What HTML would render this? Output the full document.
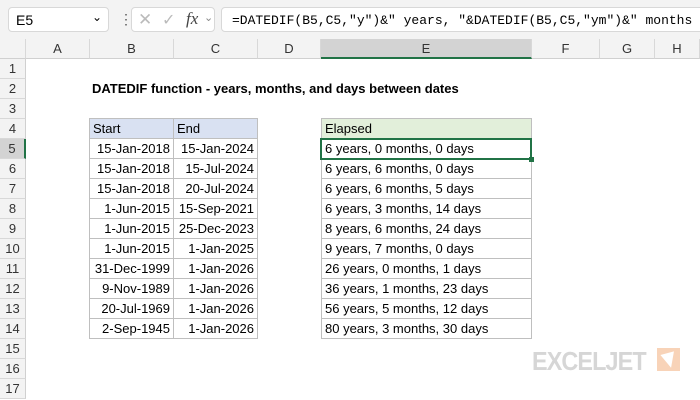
<!DOCTYPE html>
<html><head><style>
*{margin:0;padding:0;box-sizing:border-box}
body{width:700px;height:400px;overflow:hidden;background:#fff;font-family:"Liberation Sans",sans-serif;position:relative}
.top{position:absolute;left:0;top:0;width:700px;height:39px;background:#f3f3f3}
.nb{position:absolute;left:8px;top:7px;width:101px;height:25px;background:#fff;border:1px solid #d8d8d8;border-radius:4px;font-size:14px;padding:4px 7px}
.fb{position:absolute;left:131px;top:7px;width:84px;height:25px;background:#fff;border:1px solid #d8d8d8;border-radius:4px}
.fx{position:absolute;left:221px;top:7px;width:490px;height:25px;background:#fff;border:1px solid #d8d8d8;border-radius:4px;font-family:"Liberation Mono",monospace;font-size:13px;padding:5px 10px;white-space:nowrap}
.ch{position:absolute;top:39px;height:20px;background:#f3f3f3;border-right:1px solid #d8d8d8;border-bottom:1px solid #d0d0d0;font-size:13px;color:#333;text-align:center;line-height:20px}
.rh{position:absolute;left:0;width:26px;height:20px;background:#f3f3f3;border-bottom:1px solid #d8d8d8;border-right:1px solid #d0d0d0;font-size:13px;color:#333;text-align:center;line-height:20px}
.c{position:absolute;height:20px;font-size:13px;line-height:20px;padding:0 3px;white-space:nowrap;color:#000}
.r{text-align:right}
.bd{border-right:1px solid #bfbfbf;border-bottom:1px solid #bfbfbf}
</style></head><body>
<div class="top"></div>
<div class="nb">E5<span style="position:absolute;right:6px;top:2px;font-size:12px">&#8964;</span></div>
<div style="position:absolute;left:119px;top:11px;font-size:14px;color:#555">&#8942;</div>
<div class="fb"><span style="position:absolute;left:6px;top:2px;color:#bbb;font-size:17px">&#10005;</span><span style="position:absolute;left:30px;top:2px;color:#bbb;font-size:16px">&#10003;</span><span style="position:absolute;left:54px;top:1px;font-family:'Liberation Serif',serif;font-style:italic;font-size:17px;color:#444">fx</span><span style="position:absolute;left:72px;top:3px;font-size:11px;color:#888">&#8964;</span></div>
<div class="fx">=DATEDIF(B5,C5,"y")&amp;" years, "&amp;DATEDIF(B5,C5,"ym")&amp;" months</div>
<div class="ch" style="left:0;width:26px"></div>
<div class="ch" style="left:26px;width:64px">A</div>
<div class="ch" style="left:90px;width:84px">B</div>
<div class="ch" style="left:174px;width:84px">C</div>
<div class="ch" style="left:258px;width:63px">D</div>
<div class="ch" style="left:321px;width:211px;background:#d3d3d3;border-bottom:2px solid #217346">E</div>
<div class="ch" style="left:532px;width:68px">F</div>
<div class="ch" style="left:600px;width:55px">G</div>
<div class="ch" style="left:655px;width:45px">H</div>
<div class="rh" style="top:59px">1</div><div class="rh" style="top:79px">2</div><div class="rh" style="top:99px">3</div><div class="rh" style="top:119px">4</div>
<div class="rh" style="top:139px;background:#d3d3d3;border-right:2px solid #217346">5</div>
<div class="rh" style="top:159px">6</div><div class="rh" style="top:179px">7</div><div class="rh" style="top:199px">8</div><div class="rh" style="top:219px">9</div><div class="rh" style="top:239px">10</div><div class="rh" style="top:259px">11</div><div class="rh" style="top:279px">12</div><div class="rh" style="top:299px">13</div><div class="rh" style="top:319px">14</div><div class="rh" style="top:339px">15</div><div class="rh" style="top:359px">16</div><div class="rh" style="top:379px">17</div>
<div class="c" style="left:89px;top:79px;font-weight:bold">DATEDIF function - years, months, and days between dates</div>
<div style="position:absolute;left:89px;top:118px;width:169px;height:221px;border-left:1px solid #bfbfbf;border-top:1px solid #bfbfbf"></div>
<div style="position:absolute;left:321px;top:118px;width:211px;height:221px;border-left:1px solid #bfbfbf;border-top:1px solid #bfbfbf"></div>
<div class="c bd" style="left:90px;top:119px;width:84px;background:#d9e1f2">Start</div>
<div class="c bd" style="left:174px;top:119px;width:84px;background:#d9e1f2">End</div>
<div class="c bd" style="left:322px;top:119px;width:210px;background:#e2efda">Elapsed</div>
<div class="c bd r" style="left:90px;top:139px;width:84px">15-Jan-2018</div><div class="c bd r" style="left:174px;top:139px;width:84px">15-Jan-2024</div><div class="c bd" style="left:322px;top:139px;width:210px">6 years, 0 months, 0 days</div>
<div class="c bd r" style="left:90px;top:159px;width:84px">15-Jan-2018</div><div class="c bd r" style="left:174px;top:159px;width:84px">15-Jul-2024</div><div class="c bd" style="left:322px;top:159px;width:210px">6 years, 6 months, 0 days</div>
<div class="c bd r" style="left:90px;top:179px;width:84px">15-Jan-2018</div><div class="c bd r" style="left:174px;top:179px;width:84px">20-Jul-2024</div><div class="c bd" style="left:322px;top:179px;width:210px">6 years, 6 months, 5 days</div>
<div class="c bd r" style="left:90px;top:199px;width:84px">1-Jun-2015</div><div class="c bd r" style="left:174px;top:199px;width:84px">15-Sep-2021</div><div class="c bd" style="left:322px;top:199px;width:210px">6 years, 3 months, 14 days</div>
<div class="c bd r" style="left:90px;top:219px;width:84px">1-Jun-2015</div><div class="c bd r" style="left:174px;top:219px;width:84px">25-Dec-2023</div><div class="c bd" style="left:322px;top:219px;width:210px">8 years, 6 months, 24 days</div>
<div class="c bd r" style="left:90px;top:239px;width:84px">1-Jun-2015</div><div class="c bd r" style="left:174px;top:239px;width:84px">1-Jan-2025</div><div class="c bd" style="left:322px;top:239px;width:210px">9 years, 7 months, 0 days</div>
<div class="c bd r" style="left:90px;top:259px;width:84px">31-Dec-1999</div><div class="c bd r" style="left:174px;top:259px;width:84px">1-Jan-2026</div><div class="c bd" style="left:322px;top:259px;width:210px">26 years, 0 months, 1 days</div>
<div class="c bd r" style="left:90px;top:279px;width:84px">9-Nov-1989</div><div class="c bd r" style="left:174px;top:279px;width:84px">1-Jan-2026</div><div class="c bd" style="left:322px;top:279px;width:210px">36 years, 1 months, 23 days</div>
<div class="c bd r" style="left:90px;top:299px;width:84px">20-Jul-1969</div><div class="c bd r" style="left:174px;top:299px;width:84px">1-Jan-2026</div><div class="c bd" style="left:322px;top:299px;width:210px">56 years, 5 months, 12 days</div>
<div class="c bd r" style="left:90px;top:319px;width:84px">2-Sep-1945</div><div class="c bd r" style="left:174px;top:319px;width:84px">1-Jan-2026</div><div class="c bd" style="left:322px;top:319px;width:210px">80 years, 3 months, 30 days</div>
<div style="position:absolute;left:320px;top:138px;width:212px;height:22px;border:2px solid #217346"></div>
<div style="position:absolute;left:529px;top:157px;width:5px;height:5px;background:#217346"></div>
<div style="position:absolute;left:532px;top:346px;font-size:26px;font-weight:bold;color:#d6d6d6;letter-spacing:-1px;transform:scaleX(0.9);transform-origin:left">EXCELJET</div>
<svg style="position:absolute;left:657px;top:348px" width="23" height="23"><rect width="23" height="23" fill="#f8d3b8"/><polygon points="5,5 19,5 12,20" fill="#fff" transform="rotate(-15 12 12)"/></svg>
</body></html>
